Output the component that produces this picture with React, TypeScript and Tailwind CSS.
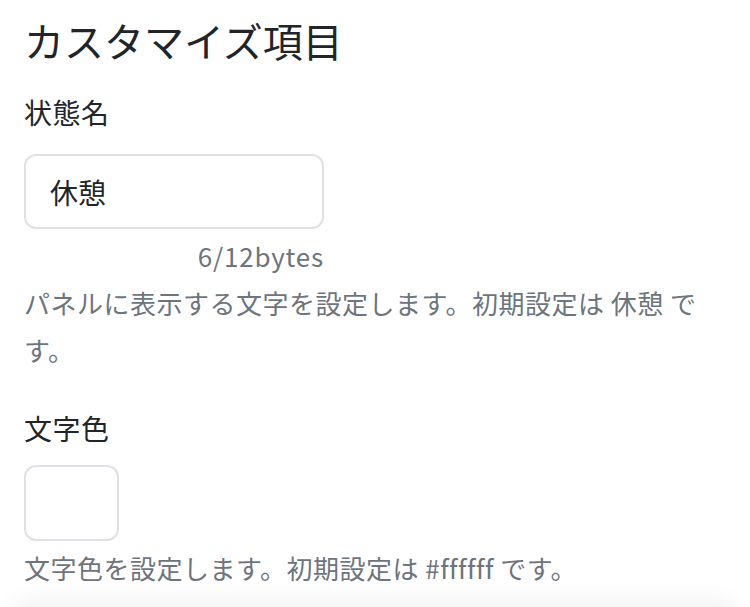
const FONT = "font-['Noto_Sans_CJK_JP','Noto_Sans',sans-serif]";

const CustomizeSection = () => {
  return (
    <div className={`relative h-[607px] overflow-hidden bg-white ${FONT}`}>
      <div className="pl-[24px] pr-[36px] pt-[12px]">
        {/* Heading */}
        <h2 className="text-[40px] leading-[56px] text-[#212529]">カスタマイズ項目</h2>

        {/* Status name */}
        <label className="mt-[24px] block text-[28px] leading-[40px] tracking-[0.5px] text-[#212529]">状態名</label>
        <div className="mt-[22px] w-[300px]">
          <input
            type="text"
            defaultValue="休憩"
            className="h-[75px] w-full rounded-[12px] border-2 border-[#dee2e6] bg-white pl-[24px] text-[28px] text-[#212529] outline-none"
          />
          <div className="mt-[9px] text-right text-[26px] leading-[36px] tracking-[0.8px] text-[#6c757d]">6/12bytes</div>
        </div>
        <p className="mt-[5px] text-[26px] leading-[47px] tracking-[0.5px] text-[#6c757d]">
          パネルに表示する文字を設定します。初期設定は 休憩 です。
        </p>

        {/* Text color */}
        <label className="mt-[35px] block text-[28px] leading-[40px] tracking-[0.5px] text-[#212529]">文字色</label>
        <div className="mt-[17px] h-[76px] w-[95px] rounded-[12px] border-2 border-[#dee2e6] bg-white" />
        <p className="mt-[3px] text-[26px] leading-[47px] tracking-[0.5px] text-[#6c757d]">
          文字色を設定します。初期設定は #ffffff です。
        </p>
      </div>

      {/* Footer shadow peeking in from below */}
      <div className="absolute bottom-[-40px] left-[10px] right-[10px] h-[40px] rounded-[24px] bg-white shadow-[0_-6px_24px_rgba(0,0,0,0.06)]" />
    </div>
  );
};

export default function App() {
  return <CustomizeSection />;
}
